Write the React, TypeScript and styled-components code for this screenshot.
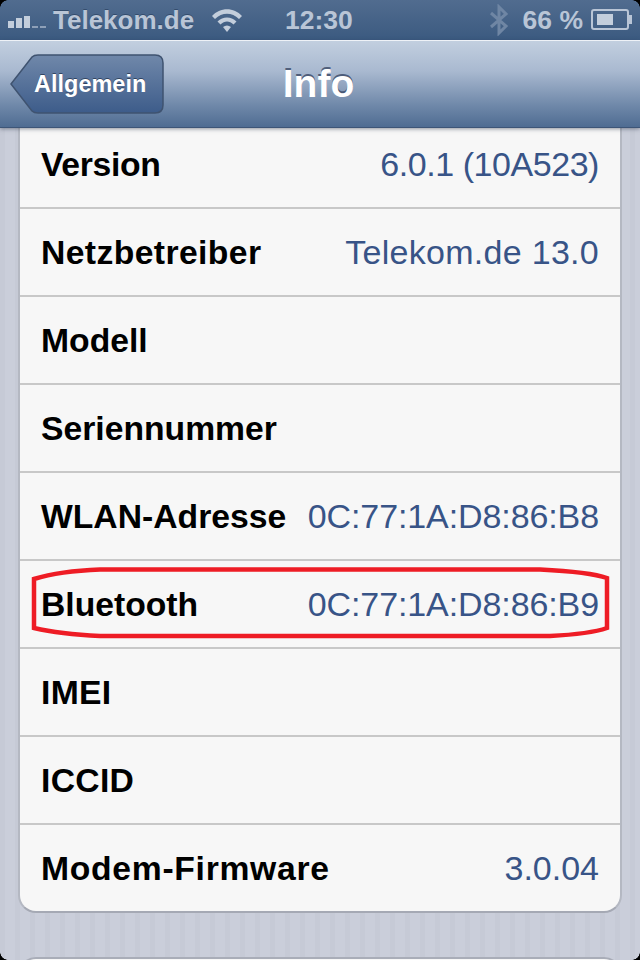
import React from "react";
import styled, { createGlobalStyle } from "styled-components";

const Global = createGlobalStyle`
  html, body { margin: 0; padding: 0; background: #000; }
  body { font-family: "Liberation Sans", Arial, sans-serif; }
`;

const Screen = styled.div`
  position: relative;
  width: 640px;
  height: 960px;
  overflow: hidden;
  display: flex;
  flex-direction: column;
  background-color: #c9cdd9;
  background-image: repeating-linear-gradient(90deg, #c6cad6 0, #c6cad6 5px, #cacedA 5px, #cacedA 15px);
`;

const StatusBar = styled.div`
  flex: none;
  height: 40px;
  box-sizing: border-box;
  position: relative;
  display: flex;
  align-items: center;
  padding: 0 7px 0 8px;
  background: linear-gradient(#516c8f, #3b5a80);
  color: #b9c5d6;
  font-size: 26px;
  font-weight: 700;
  white-space: nowrap;
`;

const Signal = styled.div`
  display: flex;
  align-items: flex-end;
  gap: 2px;
  height: 12px;
  margin-top: 4px;
`;

const SignalBar = styled.span<{ $h: number; $off?: boolean }>`
  width: 6px;
  height: ${(p) => p.$h}px;
  background: ${(p) => (p.$off ? "#8ea0b8" : "#c3cedc")};
`;

const Carrier = styled.span`
  margin-left: 7px;
  text-shadow: 0 -1px 0 rgba(30, 50, 80, 0.5);
`;

const WifiIcon = styled.svg`
  margin-left: 17px;
  width: 32px;
  height: 26px;
`;

const Clock = styled.span`
  position: absolute;
  left: 285px;
  top: 5px;
  font-weight: 700;
  font-size: 26.5px;
`;

const StatusRight = styled.div`
  margin-left: auto;
  display: flex;
  align-items: center;
  height: 100%;
`;

const BtIcon = styled.svg`
  width: 20px;
  height: 32px;
  margin-right: 14px;
`;

const Percent = styled.span`
  margin-right: 8px;
  font-size: 26.5px;
`;

const BatteryIcon = styled.svg`
  width: 42px;
  height: 22px;
`;

const NavBar = styled.div`
  flex: none;
  position: relative;
  z-index: 2;
  height: 87px;
  box-sizing: border-box;
  border-top: 1px solid #eef2f7;
  background: linear-gradient(#c2cfdf 0%, #a9b9d0 35%, #6f88a9 75%, #4f6c92 100%);
  box-shadow: 0 1px 0 #3d5577, 0 2px 4px rgba(40, 50, 70, 0.5);
  display: flex;
  align-items: center;
  justify-content: center;
`;

const BackButton = styled.div`
  position: absolute;
  left: 10px;
  top: 13px;
  width: 154px;
  height: 60px;
  display: flex;
  align-items: center;
`;

const BackShape = styled.svg`
  position: absolute;
  left: 0;
  top: 0;
  width: 154px;
  height: 60px;
`;

const BackLabel = styled.span`
  position: relative;
  margin-left: 24px;
  font-size: 23.5px;
  font-weight: 700;
  color: #fff;
  text-shadow: 0 -1px 0 rgba(30, 45, 70, 0.7);
`;

const Title = styled.h1`
  margin: 0 0 1px -3px;
  font-size: 39px;
  font-weight: 700;
  color: #fff;
  text-shadow: 0 -2px 0 rgba(50, 65, 95, 0.75);
`;

const Content = styled.div`
  flex: 1;
  min-height: 0;
  overflow: hidden;
  padding: 0 18px;
`;

const Card = styled.div`
  background: #f7f7f7;
  border: 2px solid #b4b8c2;
  border-top: 0;
  border-bottom-color: #a5a9b4;
  border-radius: 0 0 18px 18px;
`;

const Row = styled.div<{ $first?: boolean; $last?: boolean }>`
  height: ${(p) => (p.$first ? 74 : 86)}px;
  display: flex;
  align-items: center;
  justify-content: space-between;
  padding: 0 21px ${(p) => (p.$first ? 6 : 0)}px 21px;
  border-bottom: ${(p) => (p.$last ? "0" : "2px solid #c8c8c8")};
`;

const Label = styled.span<{ $track?: number }>`
  font-size: 33.7px;
  font-weight: 700;
  color: #000;
  white-space: nowrap;
  letter-spacing: ${(p) => p.$track ?? 0}px;
`;

const Value = styled.span<{ $track?: number }>`
  font-size: 34px;
  color: #385487;
  white-space: nowrap;
  letter-spacing: ${(p) => p.$track ?? 0}px;
`;

const NextCard = styled.div`
  height: 60px;
  margin-top: 44px;
  background: #f7f7f7;
  border: 2px solid #a9adb8;
  border-radius: 18px;
`;

const Highlight = styled.svg`
  position: absolute;
  left: 0;
  top: 560px;
  width: 640px;
  height: 90px;
  pointer-events: none;
`;

const Corner = styled.div<{ $pos: "tl" | "tr" | "bl" | "br" }>`
  position: absolute;
  z-index: 3;
  width: 8px;
  height: 8px;
  ${(p) => (p.$pos[0] === "t" ? "top: 0;" : "bottom: 0;")}
  ${(p) => (p.$pos[1] === "l" ? "left: 0;" : "right: 0;")}
  background: radial-gradient(circle at ${(p) => (p.$pos[1] === "l" ? "100%" : "0")} ${(p) => (p.$pos[0] === "t" ? "100%" : "0")}, transparent 7.5px, #000 8px);
`;

const rows: { label: string; value?: string; labelTrack?: number; valueTrack?: number }[] = [
  { label: "Version", value: "6.0.1 (10A523)", labelTrack: -0.3, valueTrack: -0.45 },
  { label: "Netzbetreiber", value: "Telekom.de 13.0", labelTrack: 0.4, valueTrack: 0.28 },
  { label: "Modell" },
  { label: "Seriennummer" },
  { label: "WLAN-Adresse", value: "0C:77:1A:D8:86:B8", valueTrack: -0.1 },
  { label: "Bluetooth", value: "0C:77:1A:D8:86:B9", valueTrack: -0.1 },
  { label: "IMEI", labelTrack: 0.3 },
  { label: "ICCID", labelTrack: 0.3 },
  { label: "Modem-Firmware", value: "3.0.04", labelTrack: 0.7 },
];

export default function App() {
  return (
    <Screen>
      <Global />
      <StatusBar>
        <Signal>
          <SignalBar $h={7} />
          <SignalBar $h={10} />
          <SignalBar $h={12} />
          <SignalBar $h={2} $off />
          <SignalBar $h={2} $off />
        </Signal>
        <Carrier>Telekom.de</Carrier>
        <WifiIcon viewBox="0 0 32 26">
          <path d="M1 9 C9 0 23 0 31 9 L28 12 C21 5 11 5 4 12 Z" fill="#c3cedc" />
          <path d="M6.5 14.5 C12 9 20 9 25.5 14.5 L22.5 17.5 C18.5 13.5 13.5 13.5 9.5 17.5 Z" fill="#c3cedc" />
          <path d="M12 20 C14.5 18 17.5 18 20 20 L16 25 Z" fill="#c3cedc" />
        </WifiIcon>
        <Clock>12:30</Clock>
        <StatusRight>
          <BtIcon viewBox="0 0 20 32" fill="none" stroke="#6f86a4" strokeWidth="3">
            <path d="M2 9 L17 22 L10 29 V3 L17 10 L2 23" />
          </BtIcon>
          <Percent>66 %</Percent>
          <BatteryIcon viewBox="0 0 42 22">
            <rect x="1" y="1" width="36" height="19" rx="2" fill="none" stroke="#b9c5d6" strokeWidth="2" />
            <rect x="6" y="5" width="16" height="11" fill="#c3cedc" />
            <path d="M38 6 H41 V15 H38 Z" fill="#b9c5d6" />
          </BatteryIcon>
        </StatusRight>
      </StatusBar>
      <NavBar>
        <BackButton>
          <BackShape viewBox="0 0 154 60">
            <defs>
              <linearGradient id="back" x1="0" y1="0" x2="0" y2="1">
                <stop offset="0" stopColor="#7088aa" />
                <stop offset="1" stopColor="#3d5c8a" />
              </linearGradient>
            </defs>
            <path
              d="M1 30 L22 3 Q24 1 28 1 H145 Q153 1 153 9 V51 Q153 59 145 59 H28 Q24 59 22 57 Z"
              fill="url(#back)"
              stroke="#3f5370"
              strokeWidth="1.5"
            />
          </BackShape>
          <BackLabel>Allgemein</BackLabel>
        </BackButton>
        <Title>Info</Title>
      </NavBar>
      <Content>
        <Card>
          {rows.map((r, i) => (
            <Row key={r.label} $first={i === 0} $last={i === rows.length - 1}>
              <Label $track={r.labelTrack}>{r.label}</Label>
              {r.value && <Value $track={r.valueTrack}>{r.value}</Value>}
            </Row>
          ))}
        </Card>
        <NextCard />
      </Content>
      <Highlight viewBox="0 560 640 90">
        <path
          d="M100 569.5 H540 Q590 572 607 578 V628 Q590 634 550 636 H100 Q60 634 34 628 V579 Q60 571 100 569.5 Z"
          fill="none"
          stroke="#ee1c25"
          strokeWidth="4.5"
        />
      </Highlight>
      <Corner $pos="tl" />
      <Corner $pos="tr" />
      <Corner $pos="bl" />
      <Corner $pos="br" />
    </Screen>
  );
}
